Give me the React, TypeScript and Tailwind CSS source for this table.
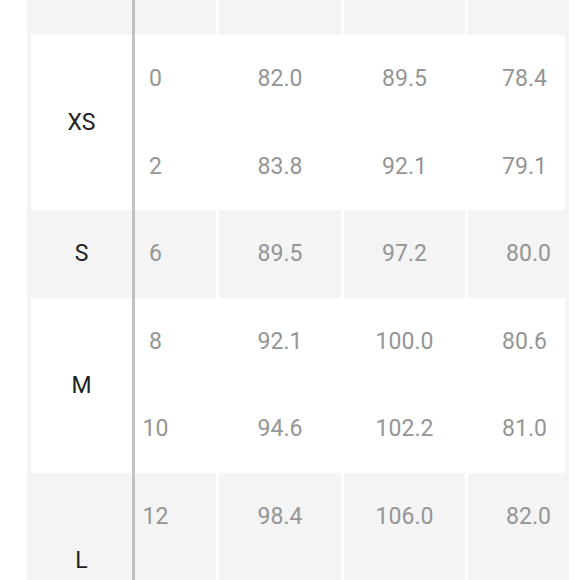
import React from "react";

type Group = {
  label: string;
  shade: "gray" | "white";
  rows: string[][];
};

const groups: Group[] = [
  { label: "XS", shade: "white", rows: [["0", "82.0", "89.5", "78.4"], ["2", "83.8", "92.1", "79.1"]] },
  { label: "S", shade: "gray", rows: [["6", "89.5", "97.2", "80.0"]] },
  { label: "M", shade: "white", rows: [["8", "92.1", "100.0", "80.6"], ["10", "94.6", "102.2", "81.0"]] },
  // second L row sits below the fold
  { label: "L", shade: "gray", rows: [["12", "98.4", "106.0", "82.0"], ["", "", "", ""]] },
];

function DataRow({ values, shade }: { values: string[]; shade: "gray" | "white" }) {
  const gray = shade === "gray";
  const cell = gray ? "bg-[#f4f4f4]" : "bg-white";
  return (
    <div className="flex h-[87.5px] gap-[3px] bg-white">
      <div className={`flex w-[81px] items-center justify-center pr-[40px] ${cell}`}>{values[0]}</div>
      <div className={`flex w-[122px] items-center justify-center ${cell}`}>{values[1]}</div>
      <div className={`flex w-[121px] items-center justify-center ${cell}`}>{values[2]}</div>
      <div className={`flex flex-1 items-center justify-center ${gray ? "pl-[20px]" : "pl-[16px]"} ${cell}`}>
        {values[3]}
      </div>
    </div>
  );
}

function SizeGroup({ group }: { group: Group }) {
  const white = group.shade === "white";
  return (
    <div className="flex bg-[#f4f4f4]">
      <div className="flex w-[105px] pl-[4px] text-[#222]">
        <div className={`flex h-full w-full items-center justify-center ${white ? "bg-white" : ""}`}>
          {group.label}
        </div>
      </div>
      <div className="w-[3px] bg-[#c2c2c2]" />
      <div className={`flex flex-1 flex-col text-[#959595] ${white ? "mr-[4px] bg-white" : ""}`}>
        {group.rows.map((values, i) => (
          <DataRow key={i} values={values} shade={group.shade} />
        ))}
      </div>
    </div>
  );
}

export default function App() {
  return (
    <div
      className="h-[580px] w-[580px] overflow-hidden bg-white text-[23px] leading-none"
      style={{ fontFamily: "Roboto, 'Noto Sans', sans-serif" }}
    >
      <div className="ml-[27px] w-[542px] bg-[#f4f4f4]">
        <div className="flex h-[35px]">
          <div className="w-[105px] bg-[#f4f4f4]" />
          <div className="w-[3px] bg-[#c2c2c2]" />
          <div className="flex flex-1 gap-[3px] bg-white">
            <div className="w-[81px] bg-[#f4f4f4]" />
            <div className="w-[122px] bg-[#f4f4f4]" />
            <div className="w-[121px] bg-[#f4f4f4]" />
            <div className="flex-1 bg-[#f4f4f4]" />
          </div>
        </div>
        {groups.map((g) => (
          <SizeGroup key={g.label} group={g} />
        ))}
      </div>
    </div>
  );
}
